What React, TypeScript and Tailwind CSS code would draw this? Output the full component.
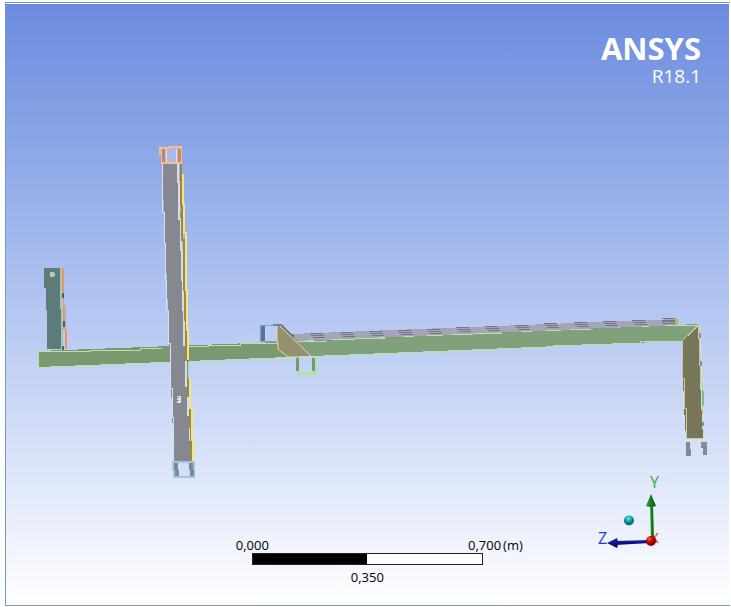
const stripes = [
  [310, 333], [340, 332], [369, 331], [398, 330], [427, 329], [456, 327], [485, 326],
  [515, 325], [544, 323], [574, 322], [603, 321], [632, 320],
];

function Model() {
  return (
    <svg
      viewBox="6 100 723 370"
      shapeRendering="crispEdges"
      className="block w-full overflow-visible"
      role="img"
      aria-label="Frame model, side view"
    >
      {/* small post on the left */}
      <path d="M44 268H61V308L63 349H47V310H46V288H44Z" fill="#5d7b78" />
      <path d="M61 268V308H62V349" fill="none" stroke="#9fc9c0" strokeWidth="2" />
      <path d="M62 268H64V305H66V330H67V349H65V330H63V293H62Z" fill="#f0945a" />
      <path d="M64 305H66V330H64Z" fill="#c9a99c" />
      <path d="M62 293h2v5h-2ZM63 321h2v6h-2ZM62 346h2v4h-2Z" fill="#59605c" />
      <path d="M50 272h3l2 2v2l-2 1h-3Z" fill="#bfc6b8" />

      {/* angle bracket behind the beam */}
      <path d="M260 325H283V341H260Z" fill="#bfcdf2" stroke="#7f9fc5" strokeWidth="1" />
      <path d="M261 326h4v15h-4Z" fill="#58769d" />

      {/* main beam */}
      <path d="M38 351L279 342L698 324L682 341L312 356L38 367Z" fill="#7b9971" />
      <path d="M300 342L698 324L682 341L312 356Z" fill="#80a17b" />
      <path
        d="M38 351H90V350H140V348H162M188 346H208V345H240V343H278M295 341H325V339H354V338H384V336H413V335H442V334H472V333H501V331H531V330H560V329H590V327H619V326H648V325H698M682 341H640V343H612V344H582V345H553V347H524V349H495V350H465V351H436V352H407V353H377V355H348V356H312M290 358H260V360H220V362H188M172 363H140V365H84V367H38V351M698 325L682 341"
        fill="none"
        stroke="#b8e2a7"
      />

      {/* perforated rail */}
      <path d="M290 334L678 319V325L295 341Z" fill="#a5a5b9" />
      {stripes.map(([x, y]) => (
        <g key={x} fill="#757687">
          <rect x={x} y={y} width="13" height="1" />
          <rect x={x + 1} y={y + 2} width="13" height="1" />
          <rect x={x + 3} y={y + 4} width="12" height="1" />
        </g>
      ))}
      <path d="M662 318h13v1h-13ZM662 320h13v2h-13ZM662 323h13v1h-13ZM290 334h4v2h-4Z" fill="#757687" />
      <path d="M675 318h2v6h-2Z" fill="#c0c23d" />

      {/* gusset and its foot */}
      <path d="M277 325H281L312 356H288L277 348Z" fill="#93916f" />
      <path d="M281 325L294 338" stroke="#77747a" strokeWidth="2" />
      <path
        d="M277 325L279 325L311 356M277 326V342H278V349L288 357H312"
        fill="none"
        stroke="#e3deb0"
        shapeRendering="auto"
      />
      <path d="M273 325H282" fill="none" stroke="#6684a5" strokeWidth="2" />
      <path d="M297 357V373H315V357" fill="none" stroke="#b2e3a2" strokeWidth="3" />
      <path d="M296 358h3v13h-3ZM312 358h3v13h-3Z" fill="#6f9d6d" />

      {/* tall post */}
      <path d="M162 163H179L182 260L185 330L192 461H174L170 360Z" fill="#858791" />
      <path
        d="M162 163V212H164V243H165V280H166V310H168V343H170V388H172V417H173V461"
        fill="none"
        stroke="#dce1e9"
      />
      <path
        d="M178 163V182H179V219H181V250H182V280H183V310H184V345H186V386H188V415H190V440H191V461"
        fill="none"
        stroke="#dadbe3"
        strokeWidth="2"
      />
      <path
        d="M181 164V205H182V240H184V290H185V320H186V360H188V396H190V427H191V461"
        fill="none"
        stroke="#988b46"
        strokeWidth="2"
      />
      <path
        d="M183 174V204H184V233H186V290H187V330H188V360M190 379V408H192V440H193V461"
        fill="none"
        stroke="#f4e583"
        strokeWidth="2"
      />
      <path d="M189 362v16" stroke="#a1dce0" strokeWidth="2" />
      <path d="M177 396h4v7h-4v-2h2v-1h-2v-2h2v-1h-2Z" fill="#e1e2e5" />

      {/* caps of the tall post */}
      <path d="M160 148H169V147H181V163H162V154H160Z" fill="#aab9e8" stroke="#f7bd91" strokeWidth="2" />
      <path d="M162 149h3v13h-3ZM178 149h3v13h-3Z" fill="#c8875c" />
      <path d="M166 149v13M176 149v13" stroke="#f2ddc8" />
      <path d="M173 462H194V477H174Z" fill="#d3def6" stroke="#a9c3df" strokeWidth="2" />
      <path d="M174 463h4l1 13h-4ZM189 463h4l1 13h-4Z" fill="#718ca2" />

      {/* right leg */}
      <path d="M682 341L698 325L700 380L703 439H686L684 407Z" fill="#77765a" />
      <path
        d="M682 341V378H684V408H686V438H703V413H702V382H700V360H699V325L682 341"
        fill="none"
        stroke="#c8c995"
      />
      <path d="M700 325V350H701V381H703V439" fill="none" stroke="#d8ddc8" />
      <path d="M700 333v5M701 361v5M703 422v4" stroke="#8e9178" strokeWidth="2" />
      <path d="M703 391v15" stroke="#79c27c" strokeWidth="2" />
      <path d="M686 442h4v7h1v7h-5ZM701 442h6v13h-4v-7h-2Z" fill="#878991" />
    </svg>
  );
}

function Triad() {
  return (
    <svg
      viewBox="590 470 76 85"
      className="block h-[85px] w-[76px] shrink-0 overflow-visible"
      role="img"
      aria-label="Axis triad"
    >
      <defs>
        <radialGradient id="origin" cx="35%" cy="30%">
          <stop offset="0" stopColor="#ff6a55" />
          <stop offset=".45" stopColor="#df1208" />
          <stop offset="1" stopColor="#920000" />
        </radialGradient>
        <radialGradient id="pivot" cx="45%" cy="30%">
          <stop offset="0" stopColor="#7be4e2" />
          <stop offset=".5" stopColor="#20b0b2" />
          <stop offset="1" stopColor="#087476" />
        </radialGradient>
        <linearGradient id="up">
          <stop offset="0" stopColor="#26a62d" />
          <stop offset="1" stopColor="#07530b" />
        </linearGradient>
        <linearGradient id="side" x2="0" y2="1">
          <stop offset="0" stopColor="#2023bd" />
          <stop offset="1" stopColor="#03034f" />
        </linearGradient>
      </defs>
      <g fontFamily="'Open Sans', 'Noto Sans', sans-serif" fontSize="16">
        <text x="650" y="488" fill="#37ad42">Y</text>
        <text x="598" y="544" fill="#3232c8">Z</text>
        <text x="650" y="543" fill="#df2626" fontSize="15">X</text>
      </g>
      <path d="M650 505h3l1 35h-3Z" fill="url(#up)" />
      <path d="M651 494L656 506Q651 508 646 506Z" fill="url(#up)" />
      <path d="M615 541L650 540V543L615 545Z" fill="url(#side)" />
      <path d="M607 543L617 538Q619 543 617 548Z" fill="url(#side)" />
      <circle cx="651" cy="541" r="5" fill="url(#origin)" />
      <circle cx="629" cy="520.5" r="5" fill="url(#pivot)" />
    </svg>
  );
}

function ScaleBar() {
  return (
    <div className="w-[231px] pt-[67px] text-[13px] leading-4 text-black">
      <div className="flex justify-between">
        <span className="-ml-4">0,000</span>
        <span className="-mr-10 flex gap-0.5">
          <span>0,700</span>
          <span>(m)</span>
        </span>
      </div>
      <div className="flex h-3 border border-[#222]">
        <div className="w-1/2 bg-black" />
        <div className="w-1/2 bg-white" />
      </div>
      <div className="pt-1 text-center">0,350</div>
    </div>
  );
}

export default function App() {
  return (
    <div className="flex min-h-screen bg-white pt-0.5 pr-px pb-px pl-[5px] font-['Open_Sans','Noto_Sans',sans-serif]">
      <main className="flex w-full flex-col border-y border-l border-[#7699c8] pt-px pr-px">
        <div className="flex grow flex-col bg-linear-to-b from-[#6b8bde] to-white">
          <header className="flex h-24 flex-col items-end pt-[26px] pr-7 text-white">
            <h1 className="text-[31px] leading-9 font-bold">ANSYS</h1>
            <p className="text-[19px] leading-5">R18.1</p>
          </header>
          <Model />
          <footer className="flex justify-between pr-[63px] pl-[34%]">
            <ScaleBar />
            <Triad />
          </footer>
        </div>
      </main>
    </div>
  );
}
